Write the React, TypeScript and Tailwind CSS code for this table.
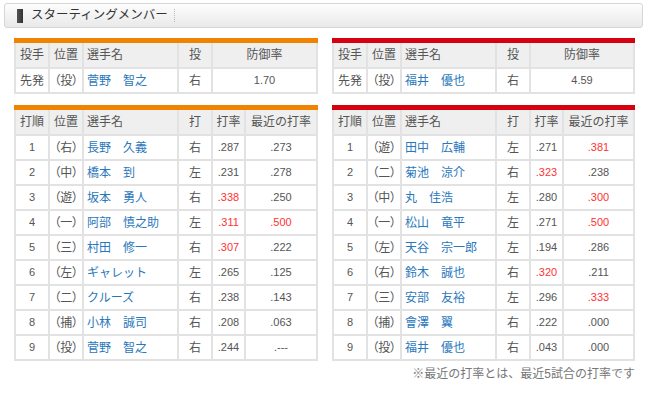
import React from 'react';

type Batter = { no: number; pos: string; name: string; hand: string; avg: string; recent: string };

const FONT = { fontFamily: '"Liberation Sans", "Noto Sans CJK JP", sans-serif' };

const giants: Batter[] = [
  { no: 1, pos: '右', name: '長野　久義', hand: '右', avg: '.287', recent: '.273' },
  { no: 2, pos: '中', name: '橋本　到', hand: '左', avg: '.231', recent: '.278' },
  { no: 3, pos: '遊', name: '坂本　勇人', hand: '右', avg: '.338', recent: '.250' },
  { no: 4, pos: '一', name: '阿部　慎之助', hand: '左', avg: '.311', recent: '.500' },
  { no: 5, pos: '三', name: '村田　修一', hand: '右', avg: '.307', recent: '.222' },
  { no: 6, pos: '左', name: 'ギャレット', hand: '左', avg: '.265', recent: '.125' },
  { no: 7, pos: '二', name: 'クルーズ', hand: '右', avg: '.238', recent: '.143' },
  { no: 8, pos: '捕', name: '小林　誠司', hand: '右', avg: '.208', recent: '.063' },
  { no: 9, pos: '投', name: '菅野　智之', hand: '右', avg: '.244', recent: '.---' },
];

const carp: Batter[] = [
  { no: 1, pos: '遊', name: '田中　広輔', hand: '左', avg: '.271', recent: '.381' },
  { no: 2, pos: '二', name: '菊池　涼介', hand: '右', avg: '.323', recent: '.238' },
  { no: 3, pos: '中', name: '丸　佳浩', hand: '左', avg: '.280', recent: '.300' },
  { no: 4, pos: '一', name: '松山　竜平', hand: '左', avg: '.271', recent: '.500' },
  { no: 5, pos: '左', name: '天谷　宗一郎', hand: '左', avg: '.194', recent: '.286' },
  { no: 6, pos: '右', name: '鈴木　誠也', hand: '右', avg: '.320', recent: '.211' },
  { no: 7, pos: '三', name: '安部　友裕', hand: '左', avg: '.296', recent: '.333' },
  { no: 8, pos: '捕', name: '會澤　翼', hand: '右', avg: '.222', recent: '.000' },
  { no: 9, pos: '投', name: '福井　優也', hand: '右', avg: '.043', recent: '.000' },
];

// .300以上は赤
const isHot = (v: string) => {
  const n = parseFloat(v);
  return !isNaN(n) && n >= 0.3;
};

function Head({ children, left }: { children: React.ReactNode; left?: boolean }) {
  return (
    <div className={`h-[24px] bg-[#efefef] flex items-center text-[12px] text-[#555] whitespace-nowrap ${left ? 'pl-[3px]' : 'justify-center'}`}>
      {children}
    </div>
  );
}

function Cell({ children, left, cls = '' }: { children: React.ReactNode; left?: boolean; cls?: string }) {
  return (
    <div className={`h-[23px] bg-white flex items-center whitespace-nowrap ${left ? 'pl-[3px]' : 'justify-center'} ${cls}`}>
      {children}
    </div>
  );
}

function Pitcher({ color, name, era }: { color: string; name: string; era: string }) {
  return (
    <div>
      <div className={`h-[5px] ${color}`} />
      <div className="grid grid-cols-[32px_32px_93px_32px_1fr] gap-[2px] bg-[#e2e2e2] px-[2px] pb-[2px]">
        <Head>投手</Head>
        <Head>位置</Head>
        <Head left>選手名</Head>
        <Head>投</Head>
        <Head>防御率</Head>
        <Cell cls="text-[12px] text-[#555]">先発</Cell>
        <Cell cls="text-[12px] text-[#555] tracking-[-0.5px]">（投）</Cell>
        <Cell left cls="text-[12px] text-[#2a78bb]">{name}</Cell>
        <Cell cls="text-[12px] text-[#555]">右</Cell>
        <Cell cls="text-[11px] text-[#555]">{era}</Cell>
      </div>
    </div>
  );
}

function Lineup({ color, rows }: { color: string; rows: Batter[] }) {
  return (
    <div>
      <div className={`h-[5px] ${color}`} />
      <div className="grid grid-cols-[32px_32px_93px_32px_31px_1fr] gap-[2px] bg-[#e2e2e2] px-[2px] pb-[2px]">
        <Head>打順</Head>
        <Head>位置</Head>
        <Head left>選手名</Head>
        <Head>打</Head>
        <Head>打率</Head>
        <Head>最近の打率</Head>
        {rows.map((r) => (
          <React.Fragment key={r.no}>
            <Cell cls="text-[11px] text-[#555]">{r.no}</Cell>
            <Cell cls="text-[12px] text-[#555] tracking-[-0.5px]">（{r.pos}）</Cell>
            <Cell left cls="text-[12px] text-[#2a78bb]">{r.name}</Cell>
            <Cell cls="text-[12px] text-[#555]">{r.hand}</Cell>
            <Cell cls={`text-[11px] ${isHot(r.avg) ? 'text-[#ff3333]' : 'text-[#555]'}`}>{r.avg}</Cell>
            <Cell cls={`text-[11px] ${isHot(r.recent) ? 'text-[#ff3333]' : 'text-[#555]'}`}>{r.recent}</Cell>
          </React.Fragment>
        ))}
      </div>
    </div>
  );
}

export default function App() {
  return (
    <div className="w-[650px] h-[393px] bg-white overflow-hidden pt-[3px]" style={FONT}>
      {/* title bar */}
      <div className="mx-[4px] w-[639px] h-[25px] rounded-[3px] border border-[#d6d6d6] bg-gradient-to-b from-[#fdfdfd] via-[#f3f3f3] to-[#e9e9e9] flex items-center">
        <div className="ml-[12px] w-[6px] h-[14px] bg-gradient-to-r from-[#555] to-[#333]" />
        <span className="ml-[8px] text-[12.5px] text-[#333] leading-none">スターティングメンバー</span>
        <div className="ml-[6px] h-[13px] border-l border-dotted border-[#bbb]" />
      </div>

      <div className="ml-[14px] w-[621px] grid grid-cols-[304px_303px] gap-x-[14px] mt-[10px]">
        <Pitcher color="bg-[#f08300]" name="菅野　智之" era="1.70" />
        <Pitcher color="bg-[#d7000f]" name="福井　優也" era="4.59" />
      </div>

      <div className="ml-[14px] w-[621px] grid grid-cols-[304px_303px] gap-x-[14px] mt-[11px]">
        <Lineup color="bg-[#f08300]" rows={giants} />
        <Lineup color="bg-[#d7000f]" rows={carp} />
      </div>

      <div className="w-[635px] text-right text-[12px] text-[#777] mt-[6px] leading-[14px]">
        ※最近の打率とは、最近5試合の打率です
      </div>
    </div>
  );
}
